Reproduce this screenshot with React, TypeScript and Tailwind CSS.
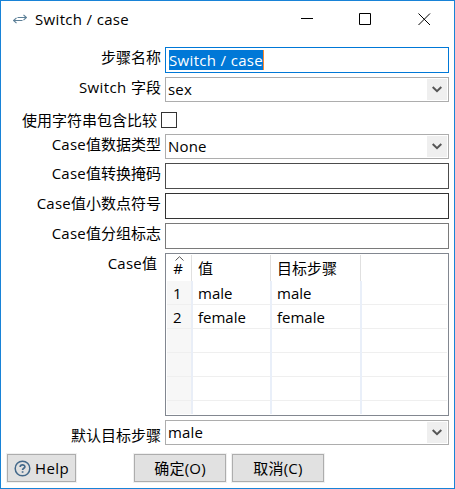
import type { ReactNode } from 'react';

function Row({ label, className, labelClass, children }: { label: ReactNode; className: string; labelClass: string; children: ReactNode }) {
  return (
    <div className={`flex items-start ${className}`}>
      <label className={`shrink-0 text-right leading-5 ${labelClass}`}>{label}</label>
      {children}
    </div>
  );
}

function Combo({ value }: { value: string }) {
  return (
    <div className="flex h-[25px] w-[284px] items-center justify-between border border-[#adadad] pr-px pl-[2px]">
      <span className="-mt-[2px] leading-5 tracking-[0.2px]">{value}</span>
      <span className="flex h-[21px] w-5 items-center justify-center bg-[#efefef]">
        <svg width="10" height="7" viewBox="0 0 10 7" fill="none" stroke="#555" strokeWidth="2">
          <path d="M0.7 1L5 5.2L9.3 1" />
        </svg>
      </span>
    </div>
  );
}

function Button({ className, children }: { className: string; children: ReactNode }) {
  return (
    <button className={`flex h-7 items-center justify-center border border-[#adadad] bg-[#e1e1e1] leading-5 outline outline-[#f0f0f0] ${className}`}>
      {children}
    </button>
  );
}

const rows = [['1', 'male', 'male'], ['2', 'female', 'female'], ['', '', ''], ['', '', ''], ['', '', ''], ['', '', '']];

function CaseTable() {
  return (
    <div className="h-[163px] w-[284px] border border-[#828790] p-px">
      <div className="flex h-[159px] flex-col overflow-hidden">
        <div className="flex h-[26px] shrink-0 leading-[26px]">
          <div className="relative w-[25px] border-r border-[#e0e0e0] pr-[2px] text-center">
            #
            <svg className="absolute top-px left-2" width="9" height="5" viewBox="0 0 9 5" fill="none" stroke="#555" strokeWidth="1">
              <path d="M0.5 4.5L4.5 0.7L8.5 4.5" />
            </svg>
          </div>
          <div className="w-[79px] border-r border-[#e0e0e0] pl-[6px]">值</div>
          <div className="w-[90px] border-r border-[#e0e0e0] pl-[6px]">目标步骤</div>
        </div>
        {rows.map((r, i) => (
          <div key={i} className="flex h-6 shrink-0 leading-6">
            <div className="w-6 border-b border-[#efefef] bg-[#f7f7f7] pl-[6px]">{r[0]}</div>
            <div className="w-[2px] bg-[#e9eef7]" />
            <div className="w-[77px] border-b border-[#efefef] pl-[5px]">{r[1]}</div>
            <div className="w-[2px] bg-[#e9eff9]" />
            <div className="w-[88px] border-b border-[#efefef] pl-[5px]">{r[2]}</div>
            <div className="w-[2px] bg-[#e9eff9]" />
            <div className="flex-1 border-b border-[#efefef]" />
          </div>
        ))}
      </div>
    </div>
  );
}

export default function App() {
  return (
    <div className="h-[489px] w-[455px] overflow-hidden border border-[#1883d7] bg-white font-['Open_Sans','Noto_Sans_CJK_SC',sans-serif] text-[15px] whitespace-nowrap text-black">
      <header className="flex h-[46px] items-start">
        <svg className="mt-[13px] ml-3" width="14" height="10" viewBox="0 0 14 10" fill="none" stroke="#5d8098" strokeWidth="1.1">
          <path d="M4.5 3.5H13.5M10.5 0.8L13.4 3.5L10.5 6.2M9.5 6.5H0.5M3.5 3.8L0.6 6.5L3.5 9.2" />
        </svg>
        <h1 className="mt-2 ml-2 flex-1 leading-5 tracking-[0.33px]">Switch / case</h1>
        <svg className="mt-3 mr-[23px]" width="130" height="13" viewBox="0 0 130 13" fill="none" stroke="#000">
          <path d="M0 5.5H12M58.5 0.5H69.5V11.5H58.5ZM117.5 0.5L129 12M129 0.5L117.5 12" />
        </svg>
      </header>

      <Row label="步骤名称" className="h-[30px]" labelClass="w-[160px] mr-1">
        <div className="h-[26px] w-[284px] border border-[#0078d7] pt-[2px] pl-[3px]">
          <span className="inline-block h-5 w-[95px] border-r border-[#ff8728] bg-[#0078d7] align-top leading-5 tracking-[0.33px] text-white">Switch / case</span>
        </div>
      </Row>
      <Row label={<><span className="tracking-[0.4px]">Switch </span>字段</>} className="h-[35px]" labelClass="w-[160px] mr-1"><Combo value="sex" /></Row>
      <Row label="使用字符串包含比较" className="h-[22px]" labelClass="w-[156px] mr-1 -mt-[2px]">
        <div className="h-4 w-4 border border-[#333]" />
      </Row>
      <Row label={<><span className="tracking-[0.25px]">Case</span>值数据类型</>} className="h-[29px]" labelClass="w-[160px] mr-1"><Combo value="None" /></Row>
      <Row label={<><span className="tracking-[0.25px]">Case</span>值转换掩码</>} className="h-[30px]" labelClass="w-[160px] mr-1">
        <div className="h-[26px] w-[284px] border border-[#4c4c4c]" />
      </Row>
      <Row label={<><span className="tracking-[0.25px]">Case</span>值小数点符号</>} className="h-[30px]" labelClass="w-[160px] mr-1">
        <div className="h-[26px] w-[284px] border border-[#333]" />
      </Row>
      <Row label={<><span className="tracking-[0.25px]">Case</span>值分组标志</>} className="h-[30px]" labelClass="w-[160px] mr-1">
        <div className="h-[26px] w-[284px] border border-[#7a7a7a]" />
      </Row>
      <Row label={<><span className="tracking-[0.25px]">Case</span>值</>} className="h-[167px]" labelClass="w-[156px] mr-2"><CaseTable /></Row>
      <Row label="默认目标步骤" className="h-[34px]" labelClass="w-[160px] mr-1 mt-[5px]"><Combo value="male" /></Row>

      <footer className="flex pl-[6px]">
        <Button className="w-[69px] gap-1 tracking-[0.4px]">
          <svg width="17" height="17" viewBox="0 0 17 17" fill="none" stroke="#42688a" strokeWidth="1.5">
            <circle cx="8.5" cy="8.5" r="7.3" />
            <path d="M6.2 6.9C6.2 4.2 10.9 4.2 10.9 6.8C10.9 8.3 8.6 8.3 8.6 10M8.6 11.3V12.8" strokeWidth="1.7" />
          </svg>
          Help
        </Button>
        <Button className="ml-[58px] w-[92px] tracking-[0.2px]">确定(O)</Button>
        <Button className="ml-[6px] w-[92px] tracking-[0.2px]">取消(C)</Button>
      </footer>
    </div>
  );
}
